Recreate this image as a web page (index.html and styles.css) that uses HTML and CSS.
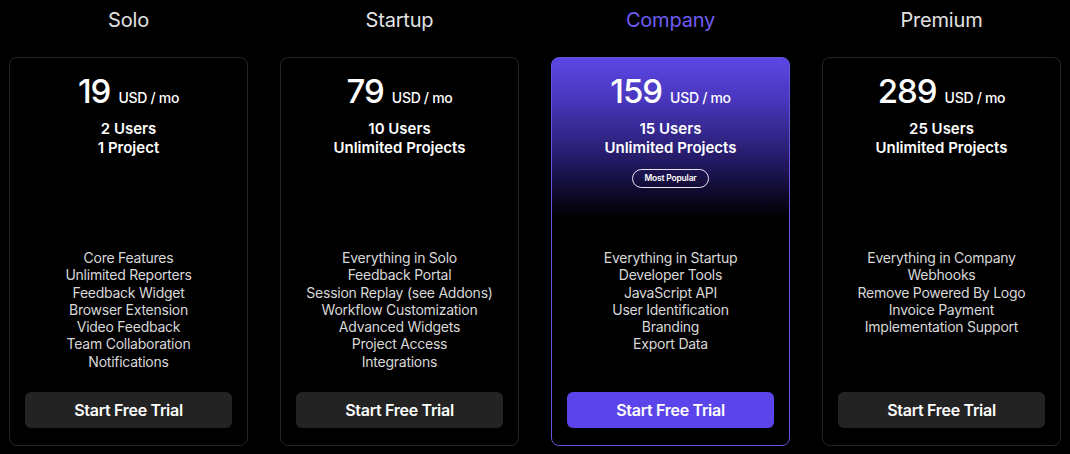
FILE: index.html
```html
<!DOCTYPE html>
<html lang="en">
<head>
<meta charset="utf-8">
<title>Pricing</title>
<link rel="stylesheet" href="styles.css">
</head>
<body>
<main class="plans">
  <section class="plan">
    <h2 class="plan-title">Solo</h2>
    <div class="card">
      <div class="card-head">
        <div class="price"><span class="amount">19</span><span class="unit">USD / mo</span></div>
        <div class="limits">2 Users<br>1 Project</div>
      </div>
      <ul class="features">
        <li>Core Features</li>
        <li>Unlimited Reporters</li>
        <li>Feedback Widget</li>
        <li>Browser Extension</li>
        <li>Video Feedback</li>
        <li>Team Collaboration</li>
        <li>Notifications</li>
      </ul>
      <button class="cta">Start Free Trial</button>
    </div>
  </section>
  <section class="plan">
    <h2 class="plan-title">Startup</h2>
    <div class="card">
      <div class="card-head">
        <div class="price"><span class="amount">79</span><span class="unit">USD / mo</span></div>
        <div class="limits">10 Users<br>Unlimited Projects</div>
      </div>
      <ul class="features">
        <li>Everything in Solo</li>
        <li>Feedback Portal</li>
        <li>Session Replay (see Addons)</li>
        <li>Workflow Customization</li>
        <li>Advanced Widgets</li>
        <li>Project Access</li>
        <li>Integrations</li>
      </ul>
      <button class="cta">Start Free Trial</button>
    </div>
  </section>
  <section class="plan plan-featured">
    <h2 class="plan-title">Company</h2>
    <div class="card">
      <div class="card-head">
        <div class="price"><span class="amount">159</span><span class="unit">USD / mo</span></div>
        <div class="limits">15 Users<br>Unlimited Projects</div>
        <span class="badge">Most Popular</span>
      </div>
      <ul class="features">
        <li>Everything in Startup</li>
        <li>Developer Tools</li>
        <li>JavaScript API</li>
        <li>User Identification</li>
        <li>Branding</li>
        <li>Export Data</li>
      </ul>
      <button class="cta">Start Free Trial</button>
    </div>
  </section>
  <section class="plan">
    <h2 class="plan-title">Premium</h2>
    <div class="card">
      <div class="card-head">
        <div class="price"><span class="amount">289</span><span class="unit">USD / mo</span></div>
        <div class="limits">25 Users<br>Unlimited Projects</div>
      </div>
      <ul class="features">
        <li>Everything in Company</li>
        <li>Webhooks</li>
        <li>Remove Powered By Logo</li>
        <li>Invoice Payment</li>
        <li>Implementation Support</li>
      </ul>
      <button class="cta">Start Free Trial</button>
    </div>
  </section>
</main>
</body>
</html>
```
FILE: styles.css
```css
* { box-sizing: border-box; }
html, body {
  margin: 0;
  background: #000;
  color: #fff;
  font-family: Inter, "Liberation Sans", sans-serif;
}
.plans {
  display: grid;
  grid-template-columns: repeat(4, 1fr);
  gap: 32px;
  padding: 0 9px;
  height: 454px;
}
.plan {
  display: flex;
  flex-direction: column;
}
.plan-title {
  margin: 8px 0 25px;
  font-size: 20px;
  line-height: 24px;
  font-weight: 400;
  text-align: center;
  color: #e2e2e2;
  letter-spacing: -0.2px;
}
.plan-featured .plan-title { color: #6f5cf2; }
.card {
  height: 389px;
  border: 1px solid #262626;
  border-radius: 8px;
  padding: 13px 15px 17px;
  display: flex;
  flex-direction: column;
  align-items: center;
  text-align: center;
}
.plan-featured .card {
  border-color: #6655d6;
  background: linear-gradient(180deg, #5b47e4 0%, #4a38c0 10%, #33268a 20%, #1d1554 29%, #0b0822 36%, #000 42%, #000 100%);
}
.card-head {
  height: 178px;
  display: flex;
  flex-direction: column;
  align-items: center;
}
.price {
  display: flex;
  align-items: baseline;
  gap: 8px;
  height: 40px;
  line-height: 40px;
}
.amount {
  font-size: 33px;
  font-weight: 500;
  letter-spacing: -1px;
}
.unit {
  font-size: 14px;
  font-weight: 500;
  letter-spacing: -0.3px;
}
.limits {
  margin-top: 8px;
  font-size: 15px;
  line-height: 19px;
  font-weight: 600;
  letter-spacing: 0;
}
.badge {
  margin-top: 12px;
  height: 19px;
  padding: 0 11px;
  border: 1px solid #e8e6f5;
  border-radius: 10px;
  font-size: 8.5px;
  line-height: 17px;
  font-weight: 600;
  letter-spacing: -0.2px;
}
.features {
  list-style: none;
  margin: 0;
  padding: 0;
  font-size: 14px;
  line-height: 17.3px;
  color: #d8d8d8;
  letter-spacing: -0.25px;
}
.cta {
  margin-top: auto;
  width: 100%;
  height: 36px;
  border: 0;
  border-radius: 6px;
  background: #232323;
  color: #fff;
  font-family: inherit;
  font-size: 16px;
  font-weight: 600;
  letter-spacing: -0.3px;
}
.plan-featured .cta { background: #5b45ea; }
```
